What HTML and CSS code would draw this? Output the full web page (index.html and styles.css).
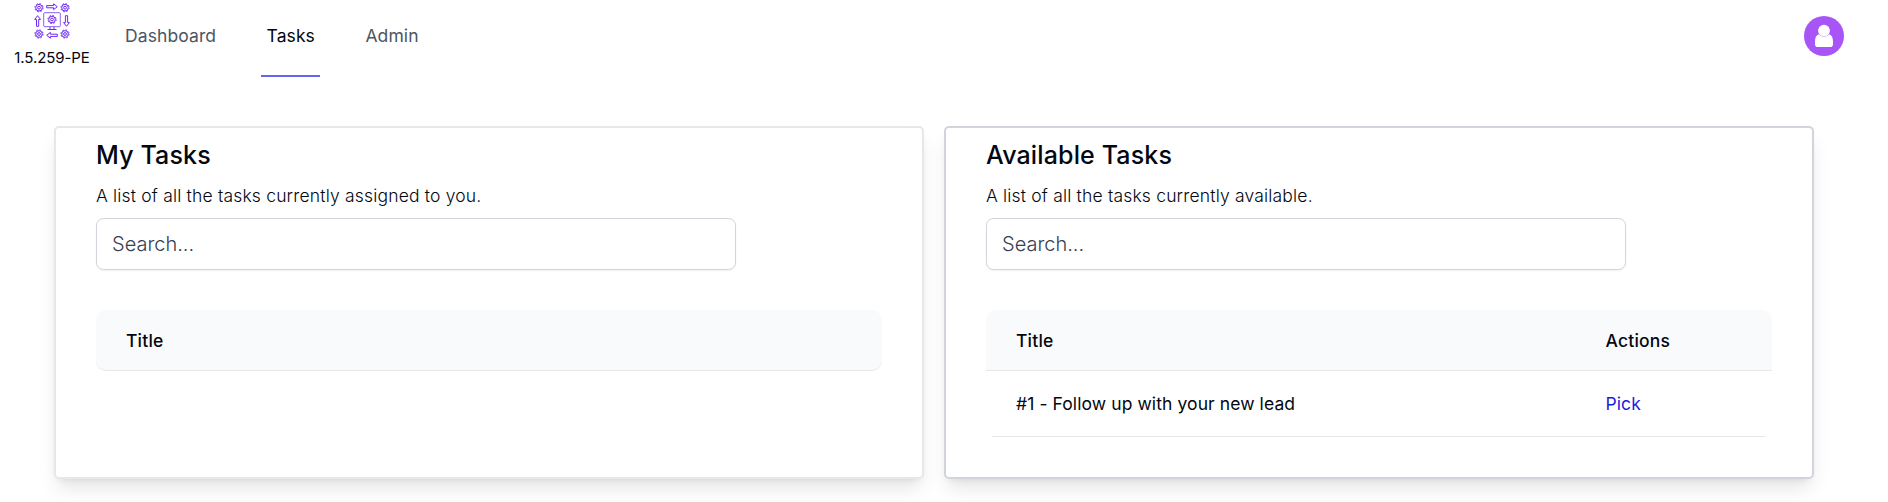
FILE: index.html
```
<!DOCTYPE html>
<html lang="en">
<head>
<meta charset="utf-8">
<title>Tasks</title>
<link rel="stylesheet" href="styles.css">
</head>
<body>
<header class="topbar">
  <div class="brand">
    <svg class="logo" viewBox="0 0 38 38" fill="none" stroke="#6d28f5">
      <defs>
        <g id="gear">
          <circle r="3.3" stroke-width="1"/>
          <circle r="4.1" stroke-width="1" stroke-dasharray="1.6 1.62"/>
          <circle r="1.4" stroke-width="1"/>
        </g>
        <path id="arrow" d="M-5.3-1.1H1.6V-2.9L5.3 0 1.6 2.9V1.1H-5.3Z" stroke-width="1"/>
      </defs>
      <use href="#gear" x="6" y="6.7"/>
      <use href="#gear" x="32" y="6.7"/>
      <use href="#gear" x="6" y="33"/>
      <use href="#gear" x="32" y="33"/>
      <use href="#arrow" x="19" y="5.7"/>
      <use href="#arrow" transform="translate(19 34.3) rotate(180)"/>
      <use href="#arrow" transform="translate(4.6 20) rotate(-90)"/>
      <use href="#arrow" transform="translate(33.5 20) rotate(90)"/>
      <rect x="10.7" y="11.7" width="16.6" height="14" rx="1" stroke-width="1" opacity=".75"/>
      <use href="#gear" x="19" y="18.5"/>
      <path d="M17 25.7v2.6M21 25.7v2.6M14.5 28.5h9" stroke-width="1"/>
    </svg>
    <span class="version">1.5.259-PE</span>
  </div>
  <nav class="nav">
    <a class="nav-link">Dashboard</a>
    <a class="nav-link active">Tasks</a>
    <a class="nav-link">Admin</a>
  </nav>
  <div class="avatar">
    <svg viewBox="0 0 40 40" fill="#fff">
      <path d="M14.8 18.3C12.2 19 11 22 11 25.500V28.200Q11 31 13.700 31H26.300Q29 31 29 28.200V25.500C29 22 27.800 19 25.200 18.300A6.900 6.900 0 0 1 14.800 18.300Z"/>
      <circle cx="20" cy="14.600" r="5.900"/>
    </svg>
  </div>
</header>
<main class="panels">
  <section class="card">
    <h2 class="card-title">My Tasks</h2>
    <p class="card-text">A list of all the tasks currently assigned to you.</p>
    <input class="search" type="text" placeholder="Search...">
    <div class="table">
      <div class="thead rounded"><span>Title</span></div>
    </div>
  </section>
  <section class="card strong">
    <h2 class="card-title">Available Tasks</h2>
    <p class="card-text">A list of all the tasks currently available.</p>
    <input class="search" type="text" placeholder="Search...">
    <div class="table">
      <div class="thead"><span>Title</span><span>Actions</span></div>
      <div class="row"><span>#1 - Follow up with your new lead</span><a class="pick">Pick</a></div>
    </div>
  </section>
</main>
</body>
</html>
```
FILE: styles.css
```
* { box-sizing: border-box; }
body {
  margin: 0;
  height: 502px;
  overflow: hidden;
  background: #fff;
  color: #030712;
  font: 17.5px/25px Inter, "Liberation Sans", sans-serif;
}
.topbar { display: flex; height: 77px; padding: 0 44px 0 14px; }
.brand { width: 76px; display: flex; flex-direction: column; align-items: center; }
.logo { width: 38px; height: 38px; margin-top: 1px; }
.version { font-size: 15px; line-height: 20px; margin-top: 9px; white-space: nowrap; letter-spacing: -.1px; }
.nav { display: flex; gap: 39px; margin-left: 29px; }
.nav-link {
  height: 77px;
  padding: 23px 6px 0;
  border-bottom: 2px solid transparent;
  color: #4b5563;
  letter-spacing: .09px;
}
.nav-link.active { color: #030712; border-color: #6366f1; padding: 23px 5.5px 0; }
.avatar {
  width: 40px;
  height: 40px;
  margin: 16px 0 0 auto;
  border-radius: 50%;
  background: #a855f7;
}
.avatar svg { display: block; }
.panels {
  display: grid;
  grid-template-columns: 870px 870px;
  gap: 20px;
  padding: 49px 0 0 54px;
}
.card {
  height: 353px;
  padding: 10px 40px 0;
  border: 2px solid #e5e7eb;
  border-radius: 5px;
  background: #fff;
  box-shadow: 0 12.5px 18.75px -3.75px rgba(0, 0, 0, .1), 0 5px 7.5px -5px rgba(0, 0, 0, .1);
}
.card.strong { border-color: #d1d5db; }
.card-title { margin: 0; font-size: 25px; line-height: 35px; font-weight: 550; letter-spacing: .14px; }
.card-text { margin: 10px 0; font-weight: 300; line-height: 25px; letter-spacing: .18px; }
.search {
  display: block;
  width: 640px;
  height: 52px;
  padding: 0 15px;
  border: 1px solid #d1d5db;
  border-radius: 7.5px;
  font: 300 20px/30px Inter, "Liberation Sans", sans-serif;
  box-shadow: 0 1px 2px rgba(0, 0, 0, .05);
}
.search::placeholder { color: #374151; opacity: 1; }
.table { margin-top: 40px; }
.thead, .row { display: grid; grid-template-columns: 589.5px 1fr; align-items: center; }
.thead {
  height: 61px;
  padding: 0 30px;
  border-bottom: 1px solid #e5e7eb;
  border-radius: 10px 10px 0 0;
  background: #f9fafb;
  font-weight: 550;
  letter-spacing: .2px;
}
.thead.rounded { border-radius: 10px; }
.row {
  height: 66px;
  margin: 0 6px;
  padding: 0 24px;
  border-bottom: 1px solid #e5e7eb;
  letter-spacing: .09px;
}
.pick { color: #1d1ddb; }
```
